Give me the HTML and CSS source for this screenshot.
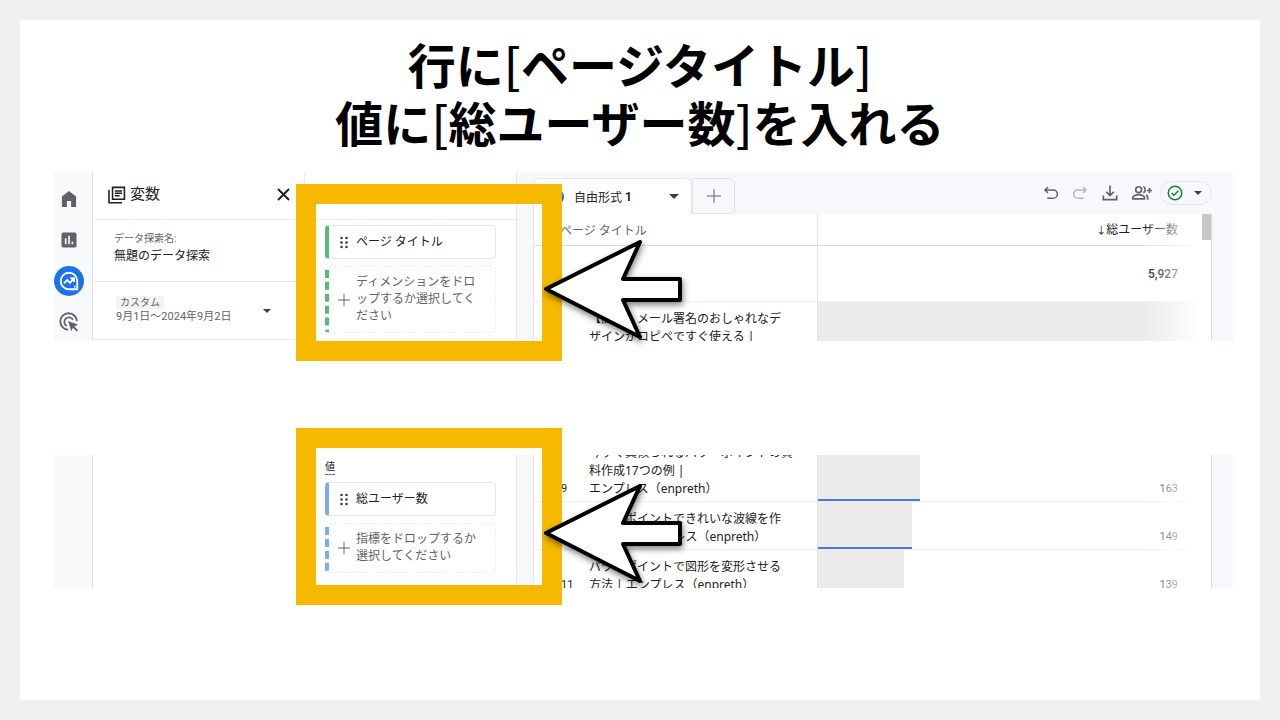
FILE: index.html
```html
<!DOCTYPE html>
<html lang="ja">
<head>
    <meta charset="UTF-8">
    <meta name="viewport" content="width=device-width, initial-scale=1.0">
    <title>行に[ページタイトル] 値に[総ユーザー数]を入れる</title>
    <link rel="stylesheet" href="styles.css">
</head>
<body>

    <main class="slide">
        <h1>行に<span class="bracket">[</span>ページタイトル<span class="bracket">]</span><br>値に<span class="bracket">[</span>総ユーザー数<span class="bracket">]</span>を入れる</h1>

        <!-- 行の設定 -->
        <section class="shot">
            <div class="crop crop-rows">
                <nav class="rail">
                    <a href="#" aria-label="ホーム"><svg width="20" height="20" viewBox="0 0 24 24"><path fill="#5f6368" d="M12 2.500 3.500 9v12.500h6v-7h5v7h6V9z"/></svg></a>
                    <a href="#" aria-label="レポート"><svg width="20" height="20" viewBox="0 0 24 24"><rect x="3" y="3" width="18" height="18" rx="2" fill="#5f6368"/><path stroke="#f8f9fb" stroke-width="2" d="M8 10v7M12 7v10M16 14v3"/></svg></a>
                    <a href="#" class="active" aria-label="探索"><svg width="22" height="22" viewBox="0 0 24 24" fill="none" stroke="#fff" stroke-width="2"><path d="M21 21h-9a9 9 0 1 1 9-9z"/><path d="m6.500 14.500 3.500-3.500 3 3 4-4.500"/><path d="M13.500 9H17.500v4"/><path d="M17.500 18h1.500"/></svg></a>
                    <a href="#" aria-label="広告"><svg width="22" height="22" viewBox="0 0 24 24" fill="none" stroke="#5f6368" stroke-width="2"><path d="M11 20.400A9 9 0 1 1 20.500 11"/><path d="M9.500 16.300A5 5 0 1 1 16.300 9.500"/><path fill="#5f6368" stroke="none" d="m11 11 11 4-4.200 1.800 4 4-1.500 1.500-4-4L14.500 22z"/></svg></a>
                </nav>

                <div class="panel variables">
                    <div class="panel-head">
                        <svg width="19" height="19" viewBox="0 0 24 24" fill="none" stroke="#202124" stroke-width="2"><path d="M7 3h15v15H7z"/><path d="M2.500 6v16.500H19"/><path d="M10 7.500h9M10 10.500h9M10 13.500h6"/></svg>
                        <h2>変数</h2>
                        <button type="button" class="close" aria-label="閉じる"><svg width="13" height="13" viewBox="0 0 13 13" stroke="#202124" stroke-width="2"><path d="m1 1 11 11M12 1 1 12"/></svg></button>
                    </div>
                    <div class="field">
                        <label for="explorationName">データ探索名:</label>
                        <input type="text" id="explorationName" value="無題のデータ探索">
                    </div>
                    <button type="button" class="date-range">
                        <span>
                            <span class="preset">カスタム</span>
                            <span class="dates">9月1日～2024年9月2日</span>
                        </span>
                        <span class="caret"></span>
                    </button>
                </div>

                <div class="panel settings">
                    <div class="panel-head"></div>
                    <div class="slots dimension">
                        <button type="button" class="item">
                            <svg width="10" height="13" viewBox="0 0 10 13" fill="#3c4043"><circle cx="2.500" cy="2" r="1.300"/><circle cx="7.500" cy="2" r="1.300"/><circle cx="2.500" cy="6.500" r="1.300"/><circle cx="7.500" cy="6.500" r="1.300"/><circle cx="2.500" cy="11" r="1.300"/><circle cx="7.500" cy="11" r="1.300"/></svg>
                            <span>ページ タイトル</span>
                        </button>
                        <button type="button" class="item drop">
                            <svg width="12" height="12" viewBox="0 0 12 12" stroke="#5f6368"><path d="M6 0v12M0 6h12"/></svg>
                            <span>ディメンションをドロップするか選択してください</span>
                        </button>
                    </div>
                </div>

                <div class="canvas">
                    <div class="toolbar">
                        <button type="button" class="tab"><span class="tab-icon"></span>自由形式 <b>1</b><span class="caret"></span></button>
                        <button type="button" class="tab-add" aria-label="タブを追加"><svg width="14" height="14" viewBox="0 0 14 14" stroke="#5f6368"><path d="M7 0v14M0 7h14"/></svg></button>
                        <div class="actions">
                            <button type="button" aria-label="元に戻す"><svg width="18" height="18" viewBox="0 0 24 24" fill="none" stroke="#5f6368" stroke-width="2"><path d="M8 4 4 8l4 4M4 8h11a5 5 0 0 1 0 11H7"/></svg></button>
                            <button type="button" aria-label="やり直す"><svg width="18" height="18" viewBox="0 0 24 24" fill="none" stroke="#b5b8bc" stroke-width="2"><path d="m16 4 4 4-4 4M20 8H9a5 5 0 0 0 0 11h8"/></svg></button>
                            <button type="button" aria-label="ダウンロード"><svg width="20" height="20" viewBox="0 0 24 24" fill="none" stroke="#5f6368" stroke-width="2"><path d="M12 3v12M7.500 10.500 12 15l4.500-4.500M4 15v5h16v-5"/></svg></button>
                            <button type="button" aria-label="共有"><svg width="22" height="20" viewBox="0 0 26 24" fill="none" stroke="#5f6368" stroke-width="2"><circle cx="9" cy="8" r="3.500"/><path d="M2 19v-1.500c0-2 4-3.500 7-3.500s7 1.500 7 3.500V19zM14.500 4.500c3 .5 3 6.500 0 7M18 14.500c2 1 2 3 2 5.500M22 6v6M19 9h6"/></svg></button>
                            <button type="button" class="status" aria-label="ステータス"><svg width="18" height="18" viewBox="0 0 24 24" fill="none" stroke="#188038" stroke-width="2"><circle cx="12" cy="12" r="9"/><path d="m7.500 12 3 3 6-6"/></svg><span class="caret"></span></button>
                        </div>
                    </div>
                    <div class="sheet">
                        <table>
                            <thead>
                                <tr>
                                    <th colspan="2" class="dim">ページ タイトル</th>
                                    <th class="metric"><span class="sort">↓</span>総ユーザー数</th>
                                </tr>
                            </thead>
                            <tbody>
                                <tr class="total">
                                    <td colspan="2"></td>
                                    <td class="metric">5,927</td>
                                </tr>
                                <tr>
                                    <td class="rank"></td>
                                    <td class="name">【簡単】メール署名のおしゃれなデ<br>ザインがコピペですぐ使える |<br>エンプレス（enpreth）</td>
                                    <td class="metric bar" style="--share: 100%"></td>
                                </tr>
                            </tbody>
                        </table>
                        <span class="scrollbar"></span>
                    </div>
                </div>
            </div>

            <div class="highlight">
                <svg class="arrow" width="150" height="112" viewBox="0 0 150 112"><path d="M7 56 101 9 84 46h57v21H84l17 37z" fill="#fff" stroke="#000" stroke-width="4" stroke-linejoin="round"/></svg>
            </div>
        </section>

        <!-- 値の設定 -->
        <section class="shot">
            <div class="crop crop-values">
                <div class="rail"></div>
                <div class="panel variables"></div>

                <div class="panel settings">
                    <div class="slots metric-slots">
                        <h3>値</h3>
                        <button type="button" class="item">
                            <svg width="10" height="13" viewBox="0 0 10 13" fill="#3c4043"><circle cx="2.500" cy="2" r="1.300"/><circle cx="7.500" cy="2" r="1.300"/><circle cx="2.500" cy="6.500" r="1.300"/><circle cx="7.500" cy="6.500" r="1.300"/><circle cx="2.500" cy="11" r="1.300"/><circle cx="7.500" cy="11" r="1.300"/></svg>
                            <span>総ユーザー数</span>
                        </button>
                        <button type="button" class="item drop">
                            <svg width="12" height="12" viewBox="0 0 12 12" stroke="#5f6368"><path d="M6 0v12M0 6h12"/></svg>
                            <span>指標をドロップするか選択してください</span>
                        </button>
                    </div>
                </div>

                <div class="canvas">
                    <div class="sheet scrolled">
                        <table>
                            <tbody>
                                <tr>
                                    <td class="rank">9</td>
                                    <td class="name">今すぐ真似られるパワーポイントの資<br>料作成17つの例 |<br>エンプレス（enpreth）</td>
                                    <td class="metric bar" style="--share: 26%">163</td>
                                </tr>
                                <tr>
                                    <td class="rank">10</td>
                                    <td class="name">パワーポイントできれいな波線を作<br>る方法 | エンプレス（enpreth）</td>
                                    <td class="metric bar" style="--share: 24%">149</td>
                                </tr>
                                <tr>
                                    <td class="rank">11</td>
                                    <td class="name">パワーポイントで図形を変形させる<br>方法 | エンプレス（enpreth）</td>
                                    <td class="metric bar" style="--share: 22%">139</td>
                                </tr>
                            </tbody>
                        </table>
                    </div>
                </div>
            </div>

            <div class="highlight highlight-values">
                <svg class="arrow" width="150" height="112" viewBox="0 0 150 112"><path d="M7 56 101 9 84 46h57v21H84l17 37z" fill="#fff" stroke="#000" stroke-width="4" stroke-linejoin="round"/></svg>
            </div>
        </section>
    </main>

</body>
</html>
```
FILE: styles.css
```css
* {
    box-sizing: border-box;
}
body {
    margin: 0;
    padding: 20px;
    min-height: 100vh;
    display: flex;
    background-color: #f0f0f0;
    font-family: Roboto, "Noto Sans CJK JP", sans-serif;
    font-size: 12px;
    color: #202124;
}
button, input {
    font: inherit;
    color: inherit;
    padding: 0;
    border: none;
    background: none;
}
button {
    cursor: pointer;
    text-align: left;
}
svg {
    display: block;
    flex: none;
}
.slide {
    flex: 1;
    min-width: 0;
    padding: 14px 27px 0 34px;
    background-color: #fff;
}
h1 {
    margin: 0 -27px 22px -34px;
    font-family: "Noto Sans CJK JP", sans-serif;
    font-size: 48px;
    line-height: 58px;
    font-weight: bold;
    text-align: center;
    color: #000;
}
.bracket {
    font-weight: 500;
}
.shot {
    position: relative;
}
.shot + .shot {
    margin-top: 114px;
}
.crop {
    display: flex;
    overflow: hidden;
}
.crop-rows {
    height: 169px;
}
.crop-values {
    height: 133px;
}

/* 左のナビゲーション */
.rail {
    flex: none;
    width: 39px;
    padding-top: 12px;
    display: flex;
    flex-direction: column;
    gap: 11px;
    background-color: #f8f9fb;
    border-right: 1px solid #dfe1e5;
}
.rail a {
    flex: none;
    width: 30px;
    height: 30px;
    display: flex;
    align-items: center;
    justify-content: center;
    border-radius: 50%;
}
.rail a.active {
    background-color: #1a73e8;
}

/* 変数・設定パネル */
.panel {
    flex: none;
    width: 212px;
}
.crop-rows .variables {
    border-right: 1px solid #e8eaed;
}
.panel-head {
    height: 48px;
    padding: 0 14px 2px 14px;
    display: flex;
    align-items: center;
    gap: 4px;
    border-bottom: 1px solid #e8eaed;
}
.panel-head h2 {
    margin: 0;
    font-size: 15px;
    line-height: 20px;
    padding-bottom: 2px;
    font-weight: normal;
}
.close {
    margin-left: auto;
}
.field {
    height: 62px;
    padding: 12px 21px;
    border-bottom: 1px solid #e8eaed;
}
.field label {
    display: block;
    font-size: 10px;
    line-height: 14px;
    color: #5f6368;
}
.field input {
    width: 100%;
    height: 16px;
    display: block;
}
.date-range {
    width: 100%;
    height: 58px;
    padding: 0 33px 0 23px;
    display: flex;
    align-items: center;
    justify-content: space-between;
    border-bottom: 1px solid #e8eaed;
    color: #5f6368;
}
.preset {
    display: table;
    padding: 0 4px;
    font-size: 10px;
    line-height: 13px;
    background-color: #f1f3f4;
}
.dates {
    display: block;
    font-size: 11px;
    line-height: 16px;
}
.caret {
    border: 4px solid transparent;
    border-top-color: #3c4043;
    border-bottom: none;
}
.settings {
    border-right: 1px solid #e4e6ea;
}
.slots {
    --accent: #5bb974;
    padding: 5px 20px;
    display: flex;
    flex-direction: column;
    gap: 7px;
}
.slots h3 {
    margin: 0;
    align-self: flex-start;
    font-size: 10px;
    line-height: 14px;
    font-weight: normal;
    border-bottom: 1px dashed #5f6368;
}
.item {
    min-height: 34px;
    padding: 0 14px 0 9px;
    display: flex;
    align-items: center;
    gap: 6px;
    line-height: 17px;
    border: 1px solid #e4e6ea;
    border-left: 4px solid var(--accent);
    border-radius: 4px;
}
.item svg {
    width: 12px;
}
.drop {
    padding-top: 7px;
    padding-bottom: 7px;
    border: 1px dashed #eceef0;
    border-left: 4px dashed var(--accent);
    color: #5f6368;
}
.metric-slots {
    --accent: #7baaf7;
}

/* データ表示エリア */
.canvas {
    flex: 1;
    min-width: 0;
    padding: 0 21px 0 16px;
    background-color: #f7f8fb;
}
.toolbar {
    height: 42px;
    padding-top: 6px;
    display: flex;
}
.tab {
    width: 159px;
    padding: 0 12px 0 14px;
    display: flex;
    align-items: center;
    background-color: #fff;
    border: 1px solid #e4e6ea;
    border-bottom: none;
    border-radius: 6px 6px 0 0;
    white-space: pre;
}
.tab-icon {
    width: 16px;
    height: 16px;
    margin-right: 10px;
    border-radius: 50%;
    background-color: #1a73e8;
}
.tab .caret {
    margin-left: auto;
    border-width: 5px 5px 0;
}
.tab-add {
    width: 43px;
    display: flex;
    align-items: center;
    justify-content: center;
    border: 1px solid #dfe1e5;
    border-radius: 0 6px 4px 0;
}
.actions {
    margin-left: auto;
    height: 30px;
    display: flex;
    align-items: center;
    gap: 11px;
}
.status {
    height: 24px;
    width: 52px;
    padding: 0 9px 0 5px;
    margin-left: -4px;
    display: flex;
    align-items: center;
    justify-content: space-between;
    border: 1px solid #e4e6ea;
    border-radius: 12px;
}
.sheet {
    position: relative;
    background-color: #fff;
    border-right: 1px solid #dadce0;
    border-left: 1px solid #e4e6ea;
}
.scrolled table {
    margin-top: -19px;
}
/* 右端のフェード */
.sheet::after {
    content: "";
    position: absolute;
    top: 0;
    right: 0;
    bottom: 0;
    width: 66px;
    background: linear-gradient(to right, rgba(255, 255, 255, 0), #fff 80%);
}
.scrollbar {
    position: absolute;
    z-index: 1;
    top: 0;
    right: 0;
    width: 9px;
    height: 26px;
    background-color: #c8c8c8;
}
table {
    width: 100%;
    border-collapse: separate;
    border-spacing: 0;
}
th, td {
    padding: 8px 0 3px;
    line-height: 18px;
    border-bottom: 1px solid #eceef0;
    vertical-align: bottom;
    text-align: left;
}
th {
    padding: 7px 0 5px;
    font-weight: normal;
    border-bottom-color: #dadce0;
}
th.dim {
    padding-left: 26px;
    color: #5f6368;
}
.sort {
    font-size: 10px;
}
.total td {
    height: 56px;
    vertical-align: middle;
    padding: 0;
    font-weight: 500;
}
.rank {
    width: 55px;
    padding-left: 27px;
    font-size: 11px;
}
.name {
    width: 228px;
    padding-right: 16px;
    font-family: "Noto Sans", "Noto Sans CJK JP", sans-serif;
}
.metric, .total .metric {
    padding-right: 33px;
    border-left: 1px solid #dfe1e5;
    text-align: right;
}
td.bar {
    font-size: 11px;
    color: #3c4043;
    background:
        linear-gradient(#3f7be0, #3f7be0) left bottom / var(--share) 2px no-repeat,
        linear-gradient(#ebebeb, #ebebeb) left top / var(--share) 100% no-repeat;
}

/* 強調枠と矢印 */
.highlight {
    position: absolute;
    top: 12px;
    left: 242px;
    width: 266px;
    height: 177px;
    border: 20px solid #f6b900;
}
.highlight-values {
    top: -27px;
}
.arrow {
    position: absolute;
    top: 29px;
    left: 223px;
    filter: drop-shadow(1px 3px 3px rgba(0, 0, 0, 0.5));
}
```
